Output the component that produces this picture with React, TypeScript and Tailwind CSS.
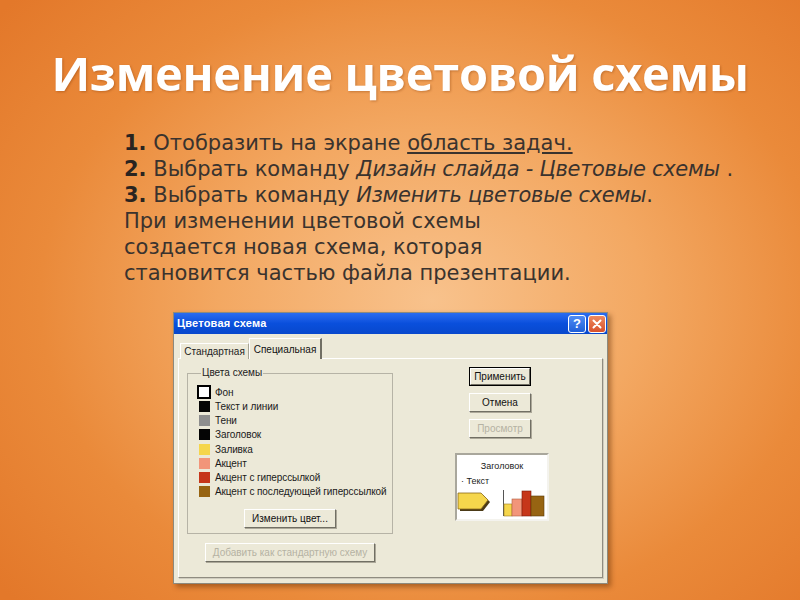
import React from 'react';

const schemeColors = [
  { name: 'Фон', swatch: 'w-[14px] h-[14px] -ml-[1px] border-2 border-black bg-white' },
  { name: 'Текст и линии', swatch: 'w-[11px] h-[11px] bg-[#050505]' },
  { name: 'Тени', swatch: 'w-[11px] h-[11px] bg-[#8e8e8e]' },
  { name: 'Заголовок', swatch: 'w-[11px] h-[11px] bg-[#050505]' },
  { name: 'Заливка', swatch: 'w-[11px] h-[11px] bg-[#f5d64c]' },
  { name: 'Акцент', swatch: 'w-[11px] h-[11px] bg-[#f2957a]' },
  { name: 'Акцент с гиперссылкой', swatch: 'w-[11px] h-[11px] bg-[#c6361a]' },
  { name: 'Акцент с последующей гиперссылкой', swatch: 'w-[11px] h-[11px] bg-[#976412]' },
];

const btn =
  'flex items-center justify-center bg-[#ece9d8] border border-t-white border-l-white border-r-[#716f64] border-b-[#716f64] shadow-[1px_1px_0_#aca899] text-[10px]';

function ClassicButton({ children, className = '', disabled = false }: { children: React.ReactNode; className?: string; disabled?: boolean }) {
  return (
    <div className={`${btn} ${disabled ? 'text-[#b5b2a3]' : 'text-[#111]'} ${className}`}>{children}</div>
  );
}

function Preview() {
  return (
    <div className="mt-[15px] w-[94px] h-[68px] bg-white border-2 border-t-[#a9a79c] border-l-[#a9a79c] border-r-[#f4f3ee] border-b-[#f4f3ee] flex flex-col">
      <div className="text-center text-[9px] leading-[10px] mt-[6px] text-[#222]">Заголовок</div>
      <div className="text-[9px] leading-[10px] mt-[5px] pl-[4px] text-[#222]">· Текст</div>
      <svg width="90" height="30" viewBox="0 0 90 30" className="mt-[1px]">
        <polygon points="3,8 26,8 33,15 26,24 3,24" fill="#4b3a16" />
        <polygon points="1,6 24,6 31,13 24,22 1,22" fill="#f5d64c" stroke="#8a6a1a" strokeWidth="0.8" />
        <line x1="46.5" y1="3" x2="46.5" y2="29" stroke="#555" strokeWidth="1" />
        <rect x="47" y="17" width="8" height="12" fill="#f5d64c" stroke="#9a7a20" strokeWidth="0.6" />
        <rect x="55" y="12" width="10" height="17" fill="#f2957a" stroke="#b06040" strokeWidth="0.6" />
        <rect x="65" y="4" width="9" height="25" fill="#c6361a" stroke="#7a1a08" strokeWidth="0.6" />
        <rect x="74" y="9" width="13" height="20" fill="#976412" stroke="#5a3a08" strokeWidth="0.6" />
      </svg>
    </div>
  );
}

function Dialog() {
  return (
    <div
      className="ml-[173px] mt-[26px] w-[435px] h-[272px] bg-[#ece9d8] border border-[#8d8a7e] shadow-[3px_3px_5px_rgba(90,40,0,0.45)] flex flex-col"
      style={{ fontFamily: '"Liberation Sans", Arial, sans-serif' }}
    >
      {/* Title bar */}
      <div className="h-[21px] flex items-center justify-between bg-gradient-to-b from-[#2a6cf0] via-[#0a4fdc] to-[#0848cc] pl-[3px] pr-[1px]">
        <span className="text-white font-bold text-[11px] tracking-[0.2px]">Цветовая схема</span>
        <div className="flex gap-[2px]">
          <div className="w-[18px] h-[18px] rounded-[3px] border border-white bg-gradient-to-b from-[#4f8cf5] to-[#1f5fd8] flex items-center justify-center text-white font-bold text-[13px] leading-none">?</div>
          <div className="w-[18px] h-[18px] rounded-[3px] border border-white bg-gradient-to-b from-[#ee8a5e] to-[#d8502c] flex items-center justify-center">
            <svg width="10" height="10" viewBox="0 0 10 10">
              <path d="M1.5 1.5 L8.5 8.5 M8.5 1.5 L1.5 8.5" stroke="white" strokeWidth="2" strokeLinecap="round" />
            </svg>
          </div>
        </div>
      </div>

      <div className="flex-1 flex flex-col px-[4px] pt-[4px] pb-[5px]">
        {/* Tabs */}
        <div className="flex items-end h-[20px] pl-[2px] relative z-10">
          <div className="w-[69px] h-[16px] border border-b-0 border-t-white border-l-white border-r-[#a7a595] flex items-center justify-center text-[10px] text-[#222] -mb-px bg-[#ece9d8]">
            Стандартная
          </div>
          <div className="w-[73px] h-[21px] border border-b-0 border-t-white border-l-white border-r-[#716f64] border-r-2 flex items-center justify-center text-[10px] text-[#111] -mb-px bg-[#ece9d8]">
            Специальная
          </div>
        </div>

        {/* Panel */}
        <div className="flex-1 border border-t-white border-l-white border-r-[#8f8c80] border-b-[#8f8c80] shadow-[1px_1px_0_#cfccbf] flex pt-[8px]">
          <div className="pl-[8px] flex flex-col">
            <fieldset className="w-[206px] min-w-0 h-[167px] border border-[#b6b3a6] pl-[9px] pr-0 pt-[6px] pb-[4px] flex flex-col">
              <legend className="ml-[4px] px-[1px] text-[10px] leading-[12px] text-[#222]">Цвета схемы</legend>
              {schemeColors.map((c) => (
                <div key={c.name} className="h-[14.25px] flex items-center">
                  <div className="w-[14px] flex justify-center">
                    <div className={c.swatch} />
                  </div>
                  <span className="ml-[4px] text-[10px] tracking-[-0.1px] text-[#1a1a1a] whitespace-nowrap">{c.name}</span>
                </div>
              ))}
              <div className="flex justify-center mt-[10px] pr-[9px]">
                <ClassicButton className="w-[92px] h-[19px]">Изменить цвет...</ClassicButton>
              </div>
            </fieldset>
            <ClassicButton disabled className="mt-[9px] ml-[18px] w-[170px] h-[19px]">
              Добавить как стандартную схему
            </ClassicButton>
          </div>

          <div className="ml-[62px] w-[94px] flex flex-col">
            <div className="ml-[14px] w-[62px] h-[19px] border border-black">
              <ClassicButton className="w-full h-full shadow-none">Применить</ClassicButton>
            </div>
            <ClassicButton className="ml-[14px] mt-[7px] w-[62px] h-[19px]">Отмена</ClassicButton>
            <ClassicButton disabled className="ml-[14px] mt-[7px] w-[62px] h-[19px]">Просмотр</ClassicButton>
            <Preview />
          </div>
        </div>
      </div>
    </div>
  );
}

export default function App() {
  return (
    <div className="w-[800px] h-[600px] overflow-hidden bg-[radial-gradient(ellipse_70%_75%_at_54%_50%,#f8c28c_0%,#f3a862_38%,#ea8a3a_70%,#e3782a_100%)] flex flex-col">
      <h1
        className="pt-[45px] text-center text-white font-bold text-[47px] leading-[56px] tracking-[-0.3px] drop-shadow-[1px_1px_1px_rgba(120,50,0,0.35)]"
        style={{ fontFamily: '"Open Sans", sans-serif' }}
      >
        Изменение цветовой схемы
      </h1>

      <div
        className="mt-[29px] pl-[124px] text-[21px] leading-[26px] text-[#3a332e]"
        style={{ fontFamily: '"DejaVu Sans", sans-serif' }}
      >
        <p>
          <b className="text-[#2a2420]">1.</b> Отобразить на экране <span className="underline underline-offset-2">область задач.</span>
        </p>
        <p>
          <b className="text-[#2a2420]">2.</b> Выбрать команду <i className="tracking-[-0.3px]">Дизайн слайда - Цветовые схемы</i> .
        </p>
        <p>
          <b className="text-[#2a2420]">3.</b> Выбрать команду <i className="tracking-[-0.3px]">Изменить цветовые схемы</i>.
        </p>
        <p>При изменении цветовой схемы</p>
        <p>создается новая схема, которая</p>
        <p>становится частью файла презентации.</p>
      </div>

      <Dialog />
    </div>
  );
}
